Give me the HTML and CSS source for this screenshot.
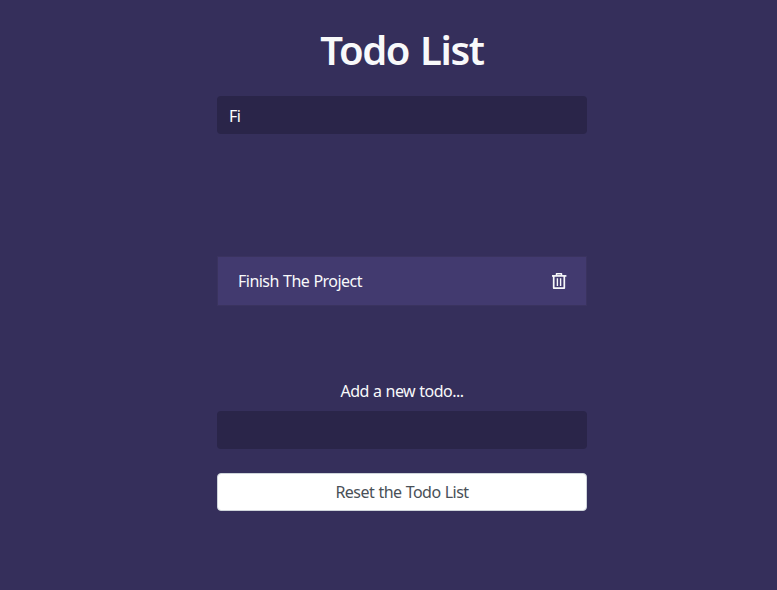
FILE: index.html
```html
<!DOCTYPE html>
<html lang="en">
<head>
<meta charset="utf-8">
<title>Todo List</title>
<link rel="stylesheet" href="styles.css">
</head>
<body>
<main class="container">
  <header>
    <h1 class="title">Todo List</h1>
    <input class="field" type="text" value="Fi" aria-label="Search todos">
  </header>
  <ul class="todos">
    <li class="todo">
      <span class="label">Finish The Project</span>
      <svg class="trash" viewBox="0 0 16 18" width="16" height="18" fill="none" stroke="#f8f9fa" stroke-width="1.7">
        <path d="M1 3.9H15.4"/>
        <path d="M5.5 3.5V1.8H10.5V3.5" stroke-width="1.5" stroke-linejoin="round"/>
        <path d="M2.7 4V16.1H13.3V4" stroke-linejoin="round"/>
        <path d="M6.4 6.3V14M9.6 6.3V14" stroke-width="1.4"/>
      </svg>
    </li>
  </ul>
  <form class="add">
    <label class="add-label" for="add">Add a new todo...</label>
    <input class="field" id="add" type="text">
    <button class="reset" type="button">Reset the Todo List</button>
  </form>
</main>
</body>
</html>
```
FILE: styles.css
```css
* { box-sizing: border-box; }
body {
  margin: 0;
  background: #352f5b;
  color: #f8f9fa;
  font: 16px/24px "Segoe UI", "Noto Sans", sans-serif;
  letter-spacing: -0.52px;
  word-spacing: 0.5px;
}
.container { width: 370px; margin-left: 217px; padding-top: 26px; }
.title {
  margin: 0 0 22px;
  font-size: 40px;
  line-height: 48px;
  font-weight: 600;
  letter-spacing: -1.4px;
  word-spacing: 2px;
  text-align: center;
}
.field {
  display: block;
  width: 100%;
  height: 38px;
  padding: 8px 12px 6px;
  border: 0;
  border-radius: 4px;
  background: #2a2549;
  color: #fff;
  font: inherit;
  letter-spacing: inherit;
}
.todos { list-style: none; margin: 122px 0 73px; padding: 0; }
.todo {
  display: flex;
  align-items: center;
  justify-content: space-between;
  height: 50px;
  padding: 0 19px 0 20px;
  border: 1px solid #3a335f;
  background: #423a6f;
}
.add-label { display: block; height: 32px; text-align: center; }
.reset {
  display: block;
  width: 100%;
  height: 38px;
  margin-top: 24px;
  border: 1px solid #ced4da;
  border-radius: 4px;
  background: #fff;
  color: #495057;
  font: inherit;
  letter-spacing: inherit;
  word-spacing: inherit;
}
```
